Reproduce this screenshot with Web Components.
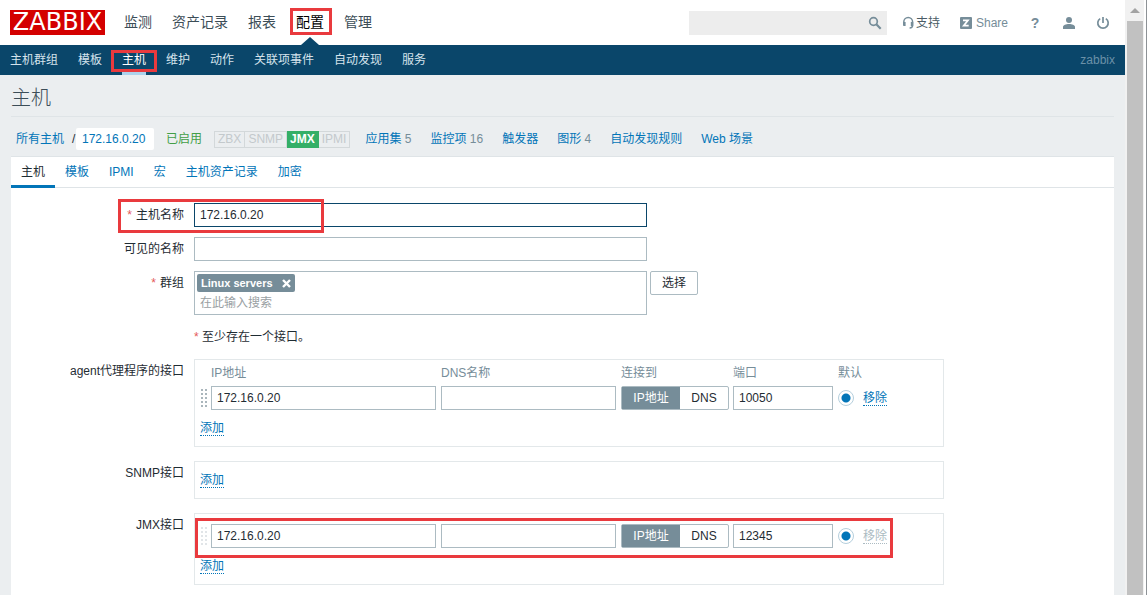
<!DOCTYPE html>
<html lang="zh-CN">
<head>
<meta charset="utf-8">
<title>主机</title>
<style>
html, body { margin: 0; height: 100%; }
body { font: 12px/16px "Liberation Sans", "Noto Sans CJK SC", sans-serif; color: #1f2c33; background: #ebeef0;
  --link: #0275b8; --muted: #768d99; --line: #acbbc2; --soft: #ebeef0; --mark: #e93a3e; }
</style>
</head>
<body>
<zbx-app></zbx-app>
<script>
const BASE = `*{box-sizing:border-box} a{color:inherit;text-decoration:none} button,input{font:inherit;color:inherit;margin:0}`;
function define(name, css, html) {
  const t = document.createElement('template');
  customElements.define(name, class extends HTMLElement {
    constructor() {
      super();
      t.innerHTML = `<style>${BASE}${css}</style>` + (typeof html === 'function' ? html(this) : html);
      this.attachShadow({ mode: 'open' }).append(t.content.cloneNode(true));
    }
  });
}

/* Red frame laid over its positioned parent */
define('mark-frame', `:host{position:absolute;border:3px solid var(--mark);pointer-events:none;box-sizing:border-box}`, '');

define('zbx-header', `
:host{display:flex;align-items:center;height:45px;padding:0 15px 0 10px;background:#fff}
.logo{background:#d40000;color:#fff;font:24px/25px "DejaVu Sans",sans-serif;width:95px;height:25px;text-align:center}
nav{display:flex;margin-left:9px;font-size:14px;line-height:45px;color:#3c4d57}
nav a{position:relative;padding:0 10px}
nav a.on{color:#000}
nav a.on::after{content:"";position:absolute;left:50%;bottom:0;margin-left:-9px;border:9px solid transparent;border-top:0;border-bottom:8px solid #0a466a}
mark-frame{left:4px;right:2px;top:8px;height:27px}
.search{margin-left:auto;position:relative;width:198px;height:24px}
.search input{width:100%;height:100%;border:0;background:#ededed;padding:0 28px 0 6px;outline:0}
.search button{position:absolute;right:5px;top:5px;width:14px;height:14px;padding:0;border:0;background:none}
svg{display:block;width:14px;height:14px}
.tools{display:flex;align-items:center;gap:20px;margin-left:15px;color:#768d99}
.tools a{display:flex;align-items:center}
.tools .sup{color:#4a5b65}
.tools .share{gap:2px}
.q{width:14px;justify-content:center;font-weight:bold;font-size:14px}`, `
<a class="logo" href="#">ZABBIX</a>
<nav><a href="#">监测</a><a href="#">资产记录</a><a href="#">报表</a><a class="on" href="#">配置<mark-frame></mark-frame></a><a href="#">管理</a></nav>
<form class="search"><input type="text" aria-label="搜索"><button type="button" aria-label="搜索"><svg viewBox="0 0 14 14" fill="none" stroke="#768d99"><circle cx="5.5" cy="5.5" r="3.8" stroke-width="1.7"/><path d="M8.3 8.3l4.4 4.4" stroke-width="2.2"/></svg></button></form>
<div class="tools">
<a class="sup" href="#"><svg viewBox="0 0 14 14" fill="none" stroke="#768d99"><path d="M1.8 9V6a4.4 4.4 0 0 1 8.8 0v3c0 2-1 3-3 3" stroke-width="1.5"/><path d="M2.4 6v4M10 6v4" stroke-width="2.4"/></svg>支持</a>
<a class="share" href="#"><svg viewBox="0 0 14 14"><rect y="1" width="12" height="12" rx="1" fill="#768d99"/><path d="M3 4.3h5l-4.300 5.400h5" fill="none" stroke="#fff" stroke-width="1.7"/></svg>Share</a>
<a class="q" href="#">?</a>
<a href="#" aria-label="用户"><svg viewBox="0 0 14 14" fill="#768d99"><circle cx="7" cy="4" r="3"/><path d="M1 13v-2c0-2 3-3 6-3s6 1 6 3v2z"/></svg></a>
<a href="#" aria-label="退出"><svg viewBox="0 0 14 14" fill="none" stroke="#768d99" stroke-width="1.7"><path d="M4.2 2.600a5.200 5.200 0 1 0 5.600 0M7 1v6"/></svg></a>
</div>`);

define('zbx-subnav', `
:host{display:flex;gap:20px;height:30px;line-height:30px;padding:0 10px;background:#0a466a;color:#d5e3ec}
a{position:relative}
.on{color:#fff}
.on::after{content:"";position:absolute;left:0;right:0;bottom:0;height:3px;background:#acd2ec}
mark-frame{left:-11px;right:-11px;top:5px;height:22px}
.user{margin-left:auto;color:#6b91a8}`, `
<a href="#">主机群组</a><a href="#">模板</a><a class="on" href="#">主机<mark-frame></mark-frame></a><a href="#">维护</a><a href="#">动作</a><a href="#">关联项事件</a><a href="#">自动发现</a><a href="#">服务</a><span class="user">zabbix</span>`);

define('zbx-title', `
:host{display:block;margin:0 11px;padding-top:5px;border-bottom:1px solid #dfe4e7}
h1{margin:0;font-size:20px;font-weight:300;line-height:36px;color:#3c4d57}`, `<h1><slot></slot></h1>`);

define('host-bar', `
:host{display:flex;align-items:center;gap:19px;height:39px;padding:5px 16px 0;color:var(--link)}
.path{display:flex;align-items:center;gap:8px;color:#1f2c33;margin-right:-7px}
.path a{color:var(--link)}
.cur{background:#fff;padding:3px 6px;margin-left:-8px;width:78px;border-radius:2px}
.sl{width:4px}
.ok{color:#429e47}
.av{display:flex;line-height:15px;margin:0 -4px 0 -7px;color:#c3c9cc}
.av span{border:1px solid #d3d8da;border-left-width:0;padding:0 3px}
.av span:first-child{border-left-width:1px}
.av .g{background:#34af67;border-color:#34af67;color:#fff;font-weight:bold}
small{font-size:12px;color:var(--muted)}`, `
<span class="path"><a href="#">所有主机</a><span class="sl">/</span><a class="cur" href="#">172.16.0.20</a></span>
<a class="ok" href="#">已启用</a>
<span class="av"><span>ZBX</span><span>SNMP</span><span class="g">JMX</span><span>IPMI</span></span>
<a href="#">应用集 <small>5</small></a><a href="#">监控项 <small>16</small></a><a href="#">触发器</a><a href="#">图形 <small>4</small></a><a href="#">自动发现规则</a><a href="#">Web 场景</a>`);

define('host-tabs', `
:host{display:flex;height:31px;line-height:31px;border-bottom:1px solid #dfe4e7;color:var(--link)}
a{padding:0 10px;height:31px}
.on{color:#1f2c33;border-bottom:3px solid var(--link)}`, `
<a class="on" href="#">主机</a><a href="#">模板</a><a href="#">IPMI</a><a href="#">宏</a><a href="#">主机资产记录</a><a href="#">加密</a>`);

define('form-row', `
:host{display:grid;grid-template-columns:173px 1fr;column-gap:10px;position:relative}
.l{text-align:right;line-height:24px}
:host([required]) .l::before{content:"*";color:#e45959;margin-right:4px}
.f{min-width:0;display:flex;gap:3px;align-items:flex-start}`, `
<div class="l"><slot name="label"></slot></div><div class="f"><slot></slot></div><slot name="mark"></slot>`);

define('interface-box', `
:host{display:block;position:relative;width:750px;border:1px solid #e3e8ea}
:host([plain]) table{margin-top:10px}
table{border-collapse:collapse;table-layout:fixed;width:100%}
th{height:26px;font-weight:normal;text-align:left;color:var(--muted)}
th,td{padding:0}
td{height:24px}
input[type=text]{display:block;height:24px;border:1px solid var(--line);padding:0 5px;background:#fff;width:calc(100% - 5px)}
.grip{display:block;width:8px;height:20px;margin-left:5px;background:radial-gradient(circle,#aab6bc 1px,transparent 1px) 0 0/4px 4px}
:host([locked]) .grip{opacity:.35}
.seg{display:flex;width:108px;height:24px;border:1px solid var(--line);line-height:22px;border-radius:2px}
.seg label{position:relative;flex:0 0 48px;text-align:center}
.seg label:first-child{flex:0 0 58px}
.seg label:has(:checked){background:var(--muted);color:#fff}
.seg input{position:absolute;inset:0;opacity:0}
.def{appearance:none;display:block;width:16px;height:16px;border:1px solid #b5cfdd;border-radius:50%;background:radial-gradient(circle,var(--link) 4px,#fff 5px)}
.dot{display:inline-block;line-height:14px;padding:0;border:0;border-bottom:1px dotted;background:none;color:var(--link);vertical-align:middle}
.dot:disabled{color:#acbbc2}
.add{height:36px;padding:10px 5px 0}
mark-frame{left:0;top:4px;width:698px;height:40px}`, el => {
  const n = el.getAttribute('name'), ip = el.getAttribute('ip');
  const plain = el.hasAttribute('plain'), locked = el.hasAttribute('locked');
  const cols = '<colgroup><col style="width:16px"><col style="width:230px"><col style="width:180px"><col style="width:112px"><col style="width:105px"><col style="width:25px"><col></colgroup>';
  const head = plain ? '' : '<thead><tr><td></td><th>IP地址</th><th>DNS名称</th><th>连接到</th><th>端口</th><th colspan="2">默认</th></tr></thead>';
  const table = !ip ? '' : `<table>${cols}${head}<tbody><tr>
<td><span class="grip"></span></td>
<td><input type="text" aria-label="IP地址" value="${ip}"></td>
<td><input type="text" aria-label="DNS名称"></td>
<td><div class="seg"><label><input type="radio" name="${n}-use" checked>IP地址</label><label><input type="radio" name="${n}-use">DNS</label></div></td>
<td><input type="text" aria-label="端口" value="${el.getAttribute('port')}"></td>
<td><input class="def" type="radio" name="${n}-default" aria-label="默认" checked></td>
<td><button class="dot" type="button" ${locked ? 'disabled' : ''}>移除</button></td></tr></tbody></table>`;
  return table + `<div class="add"><button class="dot" type="button">添加</button></div>` + (locked ? '<mark-frame></mark-frame>' : '');
});

define('host-form', `
:host{display:block;padding:15px 0 10px}
form{display:grid;gap:10px}
.ifs{display:grid;gap:14px}
.text{width:453px;height:24px;border:1px solid var(--line);padding:0 5px;background:#fff;outline:0}
.focus{border-color:#0a466a}
.multi{width:453px;height:44px;border:1px solid var(--line);padding:2px}
.tag{display:flex;align-items:center;justify-content:space-between;width:98px;height:18px;padding:0 4px;background:var(--muted);color:#fff;font-weight:bold;font-size:11px;border-radius:2px}
.tag button{padding:0;border:0;background:none;width:9px;height:9px}
.tag svg{display:block}
.multi input{display:block;width:100%;height:20px;border:0;padding:0 3px;margin-top:1px;background:none;outline:0}
::placeholder{color:#9a9fa3;opacity:1}
.btn{width:48px;height:24px;padding:0;border:1px solid var(--line);border-radius:2px;background:#fff}
.hint{line-height:24px}
.hint b{color:#e45959;font-weight:normal}
mark-frame{left:107px;top:-4px;width:206px;height:34px}`, `
<form>
<form-row required><label slot="label" for="host">主机名称</label><input class="text focus" id="host" type="text" value="172.16.0.20"><mark-frame slot="mark"></mark-frame></form-row>
<form-row><label slot="label" for="visible">可见的名称</label><input class="text" id="visible" type="text"></form-row>
<form-row required><label slot="label" for="groups">群组</label>
<div class="multi"><span class="tag">Linux servers<button type="button" aria-label="移除"><svg width="9" height="9" viewBox="0 0 9 9" stroke="#fff" stroke-width="2.4"><path d="M1 1l7 7M8 1l-7 7"/></svg></button></span><input id="groups" type="text" placeholder="在此输入搜索"></div>
<button class="btn" type="button">选择</button></form-row>
<form-row><div class="hint"><b>*</b> 至少存在一个接口。</div></form-row>
<div class="ifs">
<form-row><span slot="label">agent代理程序的接口</span><interface-box name="agent" ip="172.16.0.20" port="10050"></interface-box></form-row>
<form-row><span slot="label">SNMP接口</span><interface-box name="snmp" plain></interface-box></form-row>
<form-row><span slot="label">JMX接口</span><interface-box name="jmx" ip="172.16.0.20" port="12345" plain locked></interface-box></form-row>
</div>
</form>`);

define('scroll-rail', `
:host{display:flex;flex-direction:column;background:linear-gradient(90deg,#f1f1f1 19px,#fff 19px 21px,#8d9296 21px);padding:0 4px 0 2px}
.up{height:21px;display:grid;place-items:center}
.up::before{content:"";border:5px solid transparent;border-top:0;border-bottom-color:#a3a3a3}
.thumb{flex:1;background:#c1c1c1}`, `<div class="up"></div><div class="thumb"></div>`);

define('zbx-app', `
:host{display:grid;grid-template-columns:minmax(0,1fr) 22px;min-height:100vh}
.page{display:flex;flex-direction:column}
main{flex:1;margin:0 11px;background:#fff;border-top:1px solid #dfe4e7}`, `
<div class="page"><zbx-header></zbx-header><zbx-subnav></zbx-subnav><zbx-title>主机</zbx-title><host-bar></host-bar>
<main><host-tabs></host-tabs><host-form></host-form></main></div>
<scroll-rail></scroll-rail>`);
</script>
</body>
</html>
